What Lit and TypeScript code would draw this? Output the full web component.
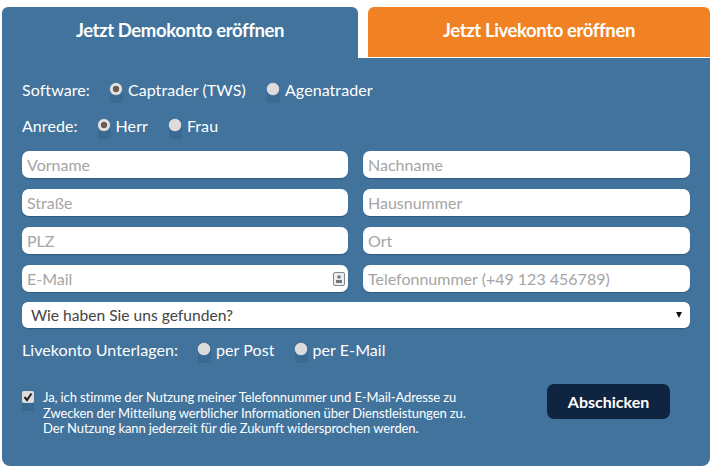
import { LitElement, html, css } from "lit";
import { customElement } from "lit/decorators.js";

@customElement("app-root")
export class AppRoot extends LitElement {
  static styles = css`
    :host { display: block; width: 714px; height: 469px; background: #fff; font-family: Lato, sans-serif; color: #fff; overflow: hidden; }
    .wrap { padding: 7px 4px 3px 2px; }
    .tabs { display: flex; gap: 10px; height: 51px; }
    .tab { height: 50px; display: flex; align-items: center; justify-content: center; font-size: 18.5px; font-weight: 700; letter-spacing: -0.38px; border-radius: 6px 6px 0 0; padding-bottom: 5px; box-sizing: border-box; }
    .demo { width: 356px; height: 51px; background: #41739d; }
    .live { flex: 1; background: #f08224; }
    .panel { background: #41739d; height: 408px; border-radius: 0 0 8px 8px; padding: 0 20px; box-sizing: border-box; }
    .row { display: flex; align-items: center; font-size: 16px; letter-spacing: 0.07px; }
    .software { height: 36px; padding-top: 13px; box-sizing: content-box; }
    .anrede { height: 36px; margin-bottom: 8px; }
    .opt { display: flex; align-items: center; gap: 5px; }
    .radio { width: 13px; height: 12px; position: relative; flex: none; }
    .radio::before { content: ""; position: absolute; left: 0; top: 0; width: 13px; height: 20px; border-radius: 3px; background: #3a6a92; }
    .radio::after { content: ""; position: absolute; left: 0; top: 0; width: 12px; height: 12px; border-radius: 50%; background: #dedbdb; box-shadow: 0 0 1px #fff; }
    .radio.on::after { background: radial-gradient(circle, #6a6058 0 3px, #e4e1e0 3.6px); }
    .grid { display: grid; grid-template-columns: 326px 327px; column-gap: 15px; row-gap: 11px; }
    .field { height: 27px; background: #fff; border-radius: 7px; box-shadow: 0 1px 1px #2f5a80; color: #a5a5a5; font-size: 16px; display: flex; align-items: center; justify-content: space-between; padding: 0 3px 0 5px; box-sizing: border-box; }
    .contact { flex: none; }
    .select { width: 668px; height: 26px; margin-top: 10px; background: #fff; border-radius: 6px; box-shadow: 0 1px 1px #2f5a80; color: #444; font-size: 15.6px; display: flex; align-items: center; justify-content: space-between; padding: 0 8px 0 9px; box-sizing: border-box; }
    .arrow { width: 0; height: 0; border-left: 3px solid transparent; border-right: 3px solid transparent; border-top: 6px solid #111; }
    .unterlagen { height: 20px; margin-top: 11px; }
    .bottom { display: flex; justify-content: space-between; margin-top: 25px; padding-right: 20px; }
    .consent { display: flex; gap: 9px; padding-top: 6px; }
    .check { width: 12px; height: 12px; position: relative; margin-top: 1px; flex: none; }
    .check::before { content: ""; position: absolute; left: 0; top: 0; width: 12px; height: 20px; border-radius: 3px; background: #3a6a92; }
    .check svg { position: absolute; left: 0; top: 0; background: #dedbdb; border-radius: 2px; }
    .consent p { margin: 0; font-size: 13px; line-height: 15.5px; letter-spacing: -0.1px; white-space: nowrap; }
    .send { width: 123px; height: 35px; background: #0f2440; border-radius: 7px; display: flex; align-items: center; justify-content: center; font-size: 16px; font-weight: 700; }
    .gap1 { margin-left: 20px; } .gap2 { margin-left: 21px; }
  `;

  private radio(label: string, on: boolean, cls: string) {
    return html`<span class="opt ${cls}"><span class="radio ${on ? "on" : ""}"></span>${label}</span>`;
  }

  render() {
    return html`<div class="wrap">
      <div class="tabs">
        <div class="tab demo">Jetzt Demokonto eröffnen</div>
        <div class="tab live">Jetzt Livekonto eröffnen</div>
      </div>
      <div class="panel">
        <div class="row software">Software:${this.radio("Captrader (TWS)", true, "gap1")}${this.radio("Agenatrader", false, "gap2")}</div>
        <div class="row anrede">Anrede:${this.radio("Herr", true, "gap1")}${this.radio("Frau", false, "gap2")}</div>
        <div class="grid">
          <div class="field">Vorname</div><div class="field">Nachname</div>
          <div class="field">Straße</div><div class="field">Hausnummer</div>
          <div class="field">PLZ</div><div class="field">Ort</div>
          <div class="field">E-Mail
            <svg class="contact" width="12" height="14" viewBox="0 0 12 14"><rect x=".5" y=".5" width="11" height="13" rx="1.5" fill="#eee" stroke="#888"/><circle cx="6" cy="5" r="1.8" fill="#777"/><rect x="3" y="8" width="6" height="3" fill="#777"/></svg>
          </div>
          <div class="field">Telefonnummer (+49 123 456789)</div>
        </div>
        <div class="select">Wie haben Sie uns gefunden?<span class="arrow"></span></div>
        <div class="row unterlagen">Livekonto Unterlagen:${this.radio("per Post", false, "gap1")}${this.radio("per E-Mail", false, "gap1")}</div>
        <div class="bottom">
          <div class="consent">
            <span class="check"><svg width="12" height="12" viewBox="0 0 12 12"><path d="M2.5 6 5 9 9.5 2.5" fill="none" stroke="#222" stroke-width="2"/></svg></span>
            <p>Ja, ich stimme der Nutzung meiner Telefonnummer und E-Mail-Adresse zu<br>Zwecken der Mitteilung werblicher Informationen über Dienstleistungen zu.<br>Der Nutzung kann jederzeit für die Zukunft widersprochen werden.</p>
          </div>
          <div class="send">Abschicken</div>
        </div>
      </div>
    </div>`;
  }
}
